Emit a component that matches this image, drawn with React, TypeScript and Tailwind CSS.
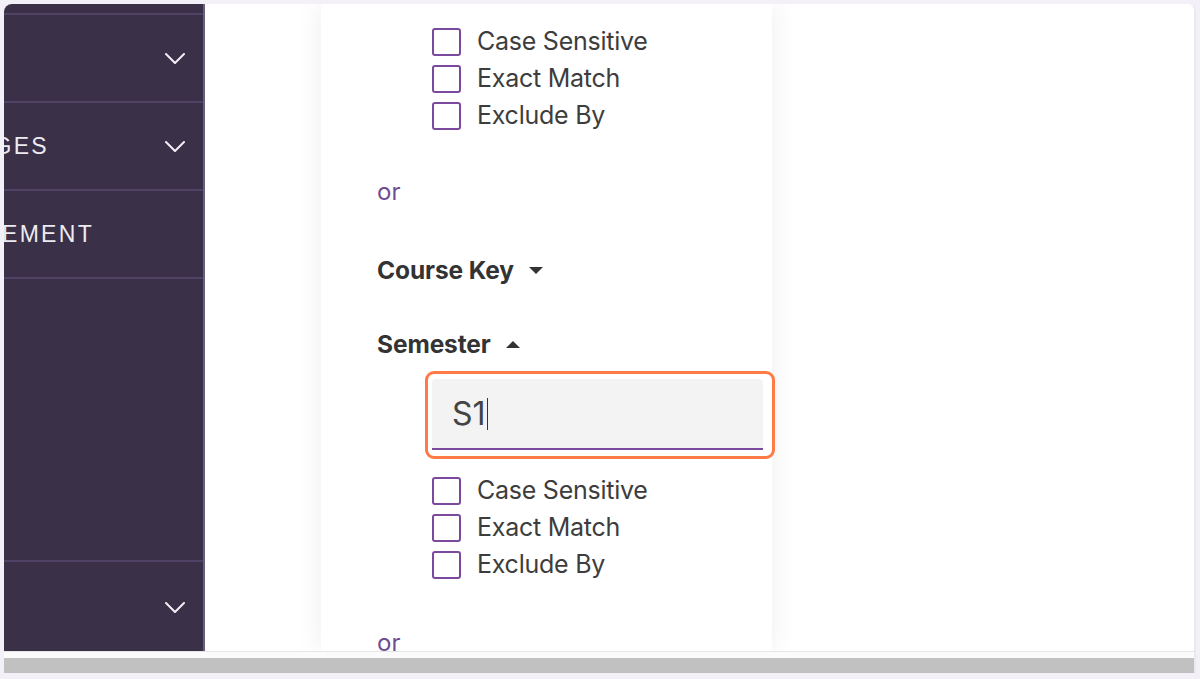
import React from 'react'

const Chevron = () => (
  <svg width="20" height="11" viewBox="0 0 20 11" fill="none" className="shrink-0">
    <polyline points="1,1 10,10 19,1" stroke="#f1eff5" strokeWidth="2" strokeLinecap="round" strokeLinejoin="round" />
  </svg>
)

const Caret = ({ up = false }: { up?: boolean }) => (
  <svg width="14" height="7" viewBox="0 0 14 7" className="shrink-0">
    {up ? <polygon points="0,7 7,0 14,7" fill="#333333" /> : <polygon points="0,0 14,0 7,7" fill="#333333" />}
  </svg>
)

const Checkbox = ({ label }: { label: string }) => (
  <div className="flex h-[37px] items-center gap-[16px]">
    <span className="h-[28px] w-[29px] rounded-[3px] border-2 border-[#7b4a9e] bg-white" />
    <span className="text-[25px] leading-none tracking-[-0.01em] text-[#3d3d3d]">{label}</span>
  </div>
)

const Options = () => (
  <div className="ml-[111px] flex flex-col">
    <Checkbox label="Case Sensitive" />
    <Checkbox label="Exact Match" />
    <Checkbox label="Exclude By" />
  </div>
)

const SideRow = ({ text, textRight, chevron }: { text?: string; textRight?: number; chevron?: boolean }) => (
  <div className="flex h-[88px] shrink-0 items-center justify-between border-b-[2px] border-[#4f4266] pr-[18px]">
    {text ? (
      <div className="flex justify-end whitespace-nowrap" style={{ width: textRight }}>
        <span className="font-['Liberation_Sans',sans-serif] text-[23px] tracking-[0.1em] text-[#edebf2]">{text}</span>
      </div>
    ) : (
      <span />
    )}
    {chevron && <Chevron />}
  </div>
)

export default function App() {
  return (
    <div className="h-[679px] w-[1200px] overflow-hidden bg-[#f3f1f7] px-[4px] pt-[4px] font-['Inter',sans-serif]">
      <div className="flex h-[669px] flex-col overflow-hidden rounded-t-[8px] border-r-2 border-[#ebe8f0] bg-white">
        <div className="flex h-[647px]">
          {/* sidebar */}
          <aside className="flex w-[201px] shrink-0 flex-col overflow-hidden border-r-2 border-[#6a5f7e] bg-[#3a3047]">
            <div className="h-[11px] shrink-0 border-b-[2px] border-[#4f4266]" />
            <SideRow chevron />
            <SideRow text="PAGES" textRight={45} chevron />
            <SideRow text="MANAGEMENT" textRight={90} />
            <div className="h-[283px] shrink-0 border-b-[2px] border-[#4f4266]" />
            <div className="flex h-[90px] shrink-0 items-center justify-end pr-[18px]">
              <Chevron />
            </div>
          </aside>

          {/* main */}
          <main className="flex-1 overflow-hidden bg-white">
            <div className="ml-[116px] h-full w-[451px] bg-white pt-[19px] shadow-[0_0_26px_rgba(0,0,0,0.07)]">
              <Options />

              <div className="ml-[56px] mt-[42px] h-[32px] text-[24px] leading-[32px] text-[#6f4c93]">or</div>

              <div className="ml-[56px] mt-[46px] flex h-[32px] items-center gap-[15px]">
                <span className="text-[24.5px] font-bold tracking-[-0.005em] text-[#333333]">Course Key</span>
                <Caret />
              </div>

              <div className="ml-[56px] mt-[42px] flex h-[32px] items-center gap-[15px]">
                <span className="text-[24.5px] font-bold tracking-[-0.005em] text-[#333333]">Semester</span>
                <Caret up />
              </div>

              <div className="relative ml-[111px] mt-[19px] w-[331px]">
                <div className="flex h-[71px] items-center rounded-t-[4px] border-b-2 border-[#7b4a9e] bg-[#f3f3f3] pl-[20px]">
                  <span className="text-[32px] leading-none text-[#444444]">S1</span>
                  <span className="ml-[1px] h-[32px] w-[1.5px] bg-[#333333]" />
                </div>
                <div className="pointer-events-none absolute left-[-7px] top-[-8px] h-[88px] w-[350px] rounded-[9px] border-[3px] border-[#ff7a45]" />
              </div>

              <div className="mt-[22px]">
                <Options />
              </div>

              <div className="ml-[56px] mt-[44px] h-[32px] text-[24px] leading-[32px] text-[#6f4c93]">or</div>
            </div>
          </main>
        </div>

        {/* horizontal scrollbar */}
        <div className="h-[22px] border-t border-[#e6e6e6] bg-[#fbfbfb] pt-[6px]">
          <div className="h-[15px] bg-[#c1c1c1]" />
        </div>
      </div>
    </div>
  )
}
